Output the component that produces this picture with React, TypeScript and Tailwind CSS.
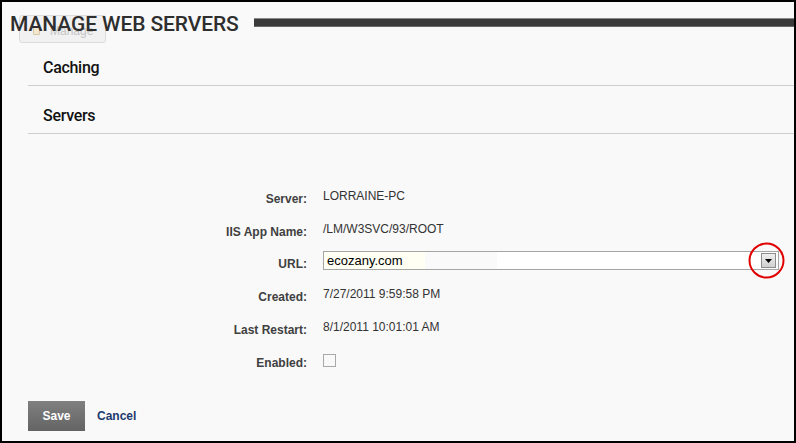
import React from "react";

const rows: { label: string; value?: string; h: string; kind?: "url" | "check" }[] = [
  { label: "Server:", value: "LORRAINE-PC", h: "h-[33px]" },
  { label: "IIS App Name:", value: "/LM/W3SVC/93/ROOT", h: "h-[32px]" },
  { label: "URL:", h: "h-[33px]", kind: "url" },
  { label: "Created:", value: "7/27/2011 9:59:58 PM", h: "h-[33px]" },
  { label: "Last Restart:", value: "8/1/2011 10:01:01 AM", h: "h-[33px]" },
  { label: "Enabled:", h: "h-[32px]", kind: "check" },
];

export default function App() {
  return (
    <div className="w-[796px] h-[443px] border-2 border-black bg-[#f9f9f9] relative overflow-hidden flex flex-col" style={{ fontFamily: "'Liberation Sans', Arial, sans-serif" }}>
      {/* ghost Manage button */}
      <div className="absolute left-[17px] top-[13px] w-[87px] h-[28px] rounded-[3px] border border-[#dcdcdc] bg-[#f1f1f1] flex items-center pl-[13px] pt-[3px] gap-[10px]">
        <div className="w-[7px] h-[8px] border border-[#d8c8a8] bg-[#f3e7d0] rounded-[1px]" />
        <span className="text-[12px] leading-[14px] text-[#c4c4c4]">Manage</span>
      </div>

      {/* header */}
      <div className="h-[36px] flex items-center pt-[4px] relative">
        <h1 className="pl-[8px] pt-[3px] text-[21px] leading-[24px] font-medium text-[#2e2e2e] tracking-[-0.1px] whitespace-nowrap" style={{ fontFamily: "Roboto, 'Open Sans', sans-serif" }}>
          MANAGE WEB SERVERS
        </h1>
        <div className="ml-[15px] flex-1 h-[9px] bg-[#3b3b3b] border-t border-b border-t-[#8a8a8a] border-b-[#6a6a6a]" />
      </div>

      {/* sections */}
      <div className="pl-[26px]" style={{ fontFamily: "Roboto, 'Open Sans', sans-serif" }}>
        <div className="h-[48px] pt-[18px] border-b border-[#cfcfcf]">
          <div className="pl-[15px] text-[16px] leading-[24px] font-medium text-[#111] tracking-[-0.3px]">Caching</div>
        </div>
        <div className="h-[48px] pt-[18px] border-b border-[#cfcfcf]">
          <div className="pl-[15px] text-[16px] leading-[24px] font-medium text-[#111] tracking-[-0.3px]">Servers</div>
        </div>
      </div>

      {/* form */}
      <div className="pl-[26px] pt-[55px] flex flex-col">
        {rows.map((r) => (
          <div key={r.label} className={`flex items-start gap-[16px] ${r.h}`}>
            <div className="w-[279px] text-right pt-[3px] text-[12px] leading-[14px] font-bold text-[#404040]">{r.label}</div>
            {r.kind === "url" ? (
              <div className="relative -mt-[3px] w-[456px] h-[19px] border border-[#a5a5a5] bg-white flex items-stretch">
                <div className="w-[101px] bg-[#fffff4] pl-[3px] text-[13px] leading-[17px] text-black">ecozany.com</div>
                <div className="w-[72px] bg-[#fafafa]" />
                <div className="flex-1" />
                <div className="w-[15px] h-[15px] mt-[1px] mr-[2px] border border-[#8c8c8c] bg-gradient-to-b from-[#f0f0f0] to-[#cfcfcf] flex items-center justify-center">
                  <svg width="7" height="4" viewBox="0 0 7 4"><path d="M0 0h7L3.5 4z" fill="#000" /></svg>
                </div>
                <svg className="absolute left-[424px] top-[-10px]" width="37" height="37" viewBox="0 0 37 37">
                  <circle cx="18.5" cy="18.5" r="17" fill="none" stroke="#e00000" strokeWidth="2" />
                </svg>
              </div>
            ) : r.kind === "check" ? (
              <div className="mt-[1px] w-[13px] h-[13px] border border-[#a8a8a8] bg-[#f9f9f9]" />
            ) : (
              <div className="text-[12px] leading-[14px] text-[#333]">{r.value}</div>
            )}
          </div>
        ))}
        <div className="mt-[16px] flex items-center gap-[12px]">
          <button className="w-[57px] h-[30px] bg-gradient-to-b from-[#808080] to-[#646464] text-white text-[12px] font-bold">Save</button>
          <span className="text-[12px] font-bold text-[#1c3a6e]">Cancel</span>
        </div>
      </div>
    </div>
  );
}
